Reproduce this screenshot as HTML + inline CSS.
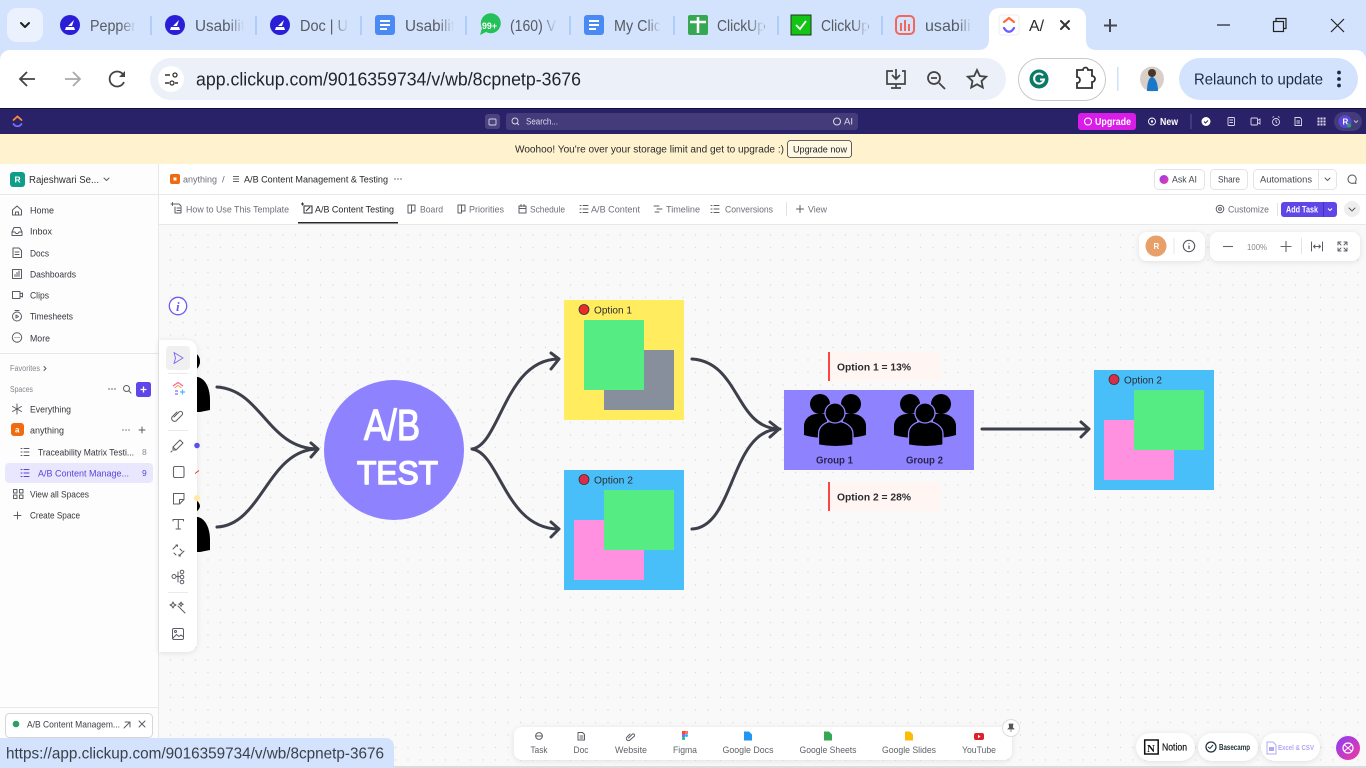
<!DOCTYPE html>
<html lang="en"><head><meta charset="utf-8"><title>A/B Content Management &amp; Testing</title>
<style>
html,body{margin:0;padding:0;width:1366px;height:768px;overflow:hidden;background:#fff}
svg{display:block;position:absolute;left:0;top:0}
text{font-family:"Liberation Sans",sans-serif;white-space:pre}
.tab{font-size:16px;fill:#565a61}
.s{font-size:9.5px;fill:#34363c}
.g{font-size:9.5px;fill:#6c6f77}
.i{fill:none;stroke:#5a5d65;stroke-width:1;stroke-linecap:round;stroke-linejoin:round}
.b{fill:none;stroke:#3f4147;stroke-width:1.8;stroke-linecap:round;stroke-linejoin:round}
.a{fill:none;stroke:#3d3f4a;stroke-width:3;stroke-linecap:round;stroke-linejoin:round}
.d{font-size:9.5px;fill:#5f6269;text-anchor:middle}
.sh{filter:drop-shadow(0 1px 3px rgba(0,0,0,.1))}
</style></head><body>
<svg width="1366" height="768" viewBox="0 0 1366 768" xmlns="http://www.w3.org/2000/svg">
<defs>
<pattern id="dots" width="12.5" height="12.5" patternUnits="userSpaceOnUse" x="2" y="4"><rect width="12.5" height="12.5" fill="#f9f9f9"/><circle cx="6" cy="6" r=".7" fill="#dcdcdc"/></pattern>
<linearGradient id="f"><stop offset="0" stop-color="#d3e3fd" stop-opacity="0"/><stop offset="1" stop-color="#d3e3fd"/></linearGradient>
<linearGradient id="ai" x1="0" y1="0" x2="1" y2="1"><stop offset="0" stop-color="#8b3df5"/><stop offset="1" stop-color="#f23aa0"/></linearGradient>
</defs>

<!-- browser tabs -->
<rect width="1366" height="50" fill="#d3e3fd"/>
<rect x="7" y="8" width="36" height="34" rx="10" fill="#ecf2fd"/>
<path d="M21 23l4 4 4-4" fill="none" stroke="#1f1f1f" stroke-width="2" stroke-linecap="round" stroke-linejoin="round"/>
<g fill="#b0ccfa">
<rect x="150" y="16" width="2" height="19"/><rect x="255" y="16" width="2" height="19"/><rect x="360" y="16" width="2" height="19"/><rect x="465" y="16" width="2" height="19"/><rect x="569" y="16" width="2" height="19"/><rect x="673" y="16" width="2" height="19"/><rect x="777" y="16" width="2" height="19"/><rect x="881" y="16" width="2" height="19"/>
</g>
<circle cx="70" cy="25" r="10" fill="#2a1fd6"/><path d="M65 30h10l-1-3h-8zM68 26l6-6-2 6z" fill="#fff"/>
<circle cx="175" cy="25" r="10" fill="#2a1fd6"/><path d="M170 30h10l-1-3h-8zM173 26l6-6-2 6z" fill="#fff"/>
<circle cx="280" cy="25" r="10" fill="#2a1fd6"/><path d="M275 30h10l-1-3h-8zM278 26l6-6-2 6z" fill="#fff"/>
<rect x="375" y="15" width="20" height="20" rx="3" fill="#4a8af4"/><path d="M380 21h10M380 25h10M380 29h7" stroke="#fff" stroke-width="2"/>
<path d="M480 35l2-7a10 10 0 1 1 4 4z" fill="#25c05a"/><text x="482" y="29" font-size="9" font-weight="700" fill="#fff" textLength="15" lengthAdjust="spacingAndGlyphs">99+</text>
<rect x="584" y="15" width="20" height="20" rx="3" fill="#4a8af4"/><path d="M589 21h10M589 25h10M589 29h7" stroke="#fff" stroke-width="2"/>
<rect x="688" y="15" width="20" height="20" rx="2" fill="#34a853"/><path d="M698 17v16M690 22h16" stroke="#fff" stroke-width="2.500"/>
<rect x="791" y="15" width="20" height="20" fill="#14c414" stroke="#1b3a1b" stroke-width="1"/><path d="M796 25l4 4 6-8" fill="none" stroke="#fff" stroke-width="1.800"/>
<rect x="896" y="16" width="18" height="18" rx="4" fill="none" stroke="#f2675c" stroke-width="2"/><path d="M901 23v8M905 20v11M909 24v7" stroke="#f2675c" stroke-width="2"/>
<text class="tab" x="90" y="31" textLength="46" lengthAdjust="spacingAndGlyphs">Pepper</text>
<text class="tab" x="195" y="31" textLength="50" lengthAdjust="spacingAndGlyphs">Usabilit</text>
<text class="tab" x="300" y="31" textLength="48" lengthAdjust="spacingAndGlyphs">Doc | U</text>
<text class="tab" x="405" y="31" textLength="50" lengthAdjust="spacingAndGlyphs">Usabilit</text>
<text class="tab" x="510" y="31" textLength="46" lengthAdjust="spacingAndGlyphs">(160) V</text>
<text class="tab" x="614" y="31" textLength="47" lengthAdjust="spacingAndGlyphs">My Clic</text>
<text class="tab" x="717" y="31" textLength="48" lengthAdjust="spacingAndGlyphs">ClickUp</text>
<text class="tab" x="821" y="31" textLength="48" lengthAdjust="spacingAndGlyphs">ClickUp</text>
<text class="tab" x="925" y="31" textLength="50" lengthAdjust="spacingAndGlyphs">usabilit</text>
<g fill="url(#f)"><rect x="120" y="14" width="16" height="22"/><rect x="228" y="14" width="16" height="22"/><rect x="333" y="14" width="16" height="22"/><rect x="438" y="14" width="16" height="22"/><rect x="542" y="14" width="15" height="22"/><rect x="646" y="14" width="15" height="22"/><rect x="749" y="14" width="15" height="22"/><rect x="853" y="14" width="15" height="22"/><rect x="957" y="14" width="15" height="22"/></g>
<rect x="136" y="14" width="12" height="22" fill="#d3e3fd"/><rect x="244" y="14" width="8" height="22" fill="#d3e3fd"/><rect x="349" y="14" width="8" height="22" fill="#d3e3fd"/><rect x="454" y="14" width="8" height="22" fill="#d3e3fd"/><rect x="972" y="14" width="8" height="22" fill="#d3e3fd"/>
<path d="M978 50c8 0 11-4 11-11V19c0-7 4-11 11-11h75c7 0 11 4 11 11v20c0 7 3 11 11 11z" fill="#fff"/>
<rect x="999" y="15" width="20" height="20" rx="3" fill="#fff" stroke="#eee"/>
<path d="M1004 22l5-4 5 4" fill="none" stroke="#ff6a3d" stroke-width="2.200" stroke-linecap="round" stroke-linejoin="round"/>
<path d="M1004 28c3 5 7 5 10 0" fill="none" stroke="#6a5cff" stroke-width="2.200" stroke-linecap="round"/>
<text x="1029" y="31" font-size="16" fill="#2a2a2a" textLength="15" lengthAdjust="spacingAndGlyphs">A/</text>
<path d="M1061 21l8 8M1069 21l-8 8" stroke="#333" stroke-width="2" stroke-linecap="round"/>
<path d="M1110 19v13M1104 25.500h13" stroke="#44474e" stroke-width="2"/>
<path d="M1217 25h13" stroke="#222" stroke-width="1.200"/>
<rect x="1273.500" y="21.500" width="10" height="10" fill="none" stroke="#222" stroke-width="1.200"/><path d="M1276 21v-2.500h10v10h-2.500" fill="none" stroke="#222" stroke-width="1.200"/>
<path d="M1331 19l13 13M1344 19l-13 13" stroke="#222" stroke-width="1.200"/>

<!-- toolbar -->
<rect y="50" width="1366" height="58" fill="#fff"/>
<path d="M0 50h10a10 10 0 0 0-10 10z" fill="#d3e3fd"/><path d="M1366 50h-10a10 10 0 0 1 10 10z" fill="#d3e3fd"/>
<path d="M35 79H21M27 72l-7 7 7 7" fill="none" stroke="#444" stroke-width="1.800"/>
<path d="M65 79h14M73 72l7 7-7 7" fill="none" stroke="#aaa" stroke-width="1.800"/>
<path d="M124 76a7.500 7.500 0 1 0 0 6" fill="none" stroke="#444" stroke-width="1.800"/><path d="M125 71v6h-6z" fill="#444"/>
<rect x="150" y="58" width="856" height="42" rx="21" fill="#ebf0f9"/>
<circle cx="171" cy="79" r="13" fill="#fff"/>
<path d="M165 75h5M175 83h3M165 83h4" stroke="#333" stroke-width="1.500"/><circle cx="175" cy="75" r="2" fill="none" stroke="#333" stroke-width="1.300"/><circle cx="172" cy="83" r="2" fill="none" stroke="#333" stroke-width="1.300"/>
<text x="196" y="85.500" font-size="18" fill="#1f2430" textLength="385" lengthAdjust="spacingAndGlyphs">app.clickup.com/9016359734/v/wb/8cpnetp-3676</text>
<path d="M893 71h-6v13h18v-13h-3M891 88h10M896 84v4M896 69v9M892 75l4 4 4-4" fill="none" stroke="#444" stroke-width="1.700"/>
<circle cx="934" cy="78" r="6" fill="none" stroke="#444" stroke-width="1.800"/><path d="M931 78h6M939 83l6 6" stroke="#444" stroke-width="1.800"/>
<path d="M977 70l2.800 6 6.400.7-4.700 4.400 1.300 6.400-5.800-3.200-5.800 3.200 1.300-6.400-4.700-4.400 6.400-.7z" fill="none" stroke="#444" stroke-width="1.800"/>
<rect x="1018.500" y="58.500" width="87" height="42" rx="21" fill="#fff" stroke="#c9c9c9"/>
<circle cx="1039" cy="79" r="9.500" fill="#0b7a66"/><path d="M1043 75.500a5 5 0 1 0 1 4h-4" fill="none" stroke="#fff" stroke-width="2"/>
<path d="M1077 70h6a2.500 2.500 0 0 1 5 0h4v6a3 3 0 0 1 0 6v6h-15v-5a3 3 0 0 0 0-6z" fill="none" stroke="#333" stroke-width="1.800"/>
<rect x="1117" y="67" width="1.500" height="24" fill="#cfe0fb"/>
<ellipse cx="1152" cy="79" rx="12" ry="12.500" fill="#d8cfc8"/><circle cx="1152" cy="73" r="4" fill="#4a352b"/><path d="M1147 91c0-8 2-14 5-14s6 6 6 14z" fill="#1b78c8"/>
<rect x="1179" y="58" width="179" height="42" rx="21" fill="#d3e3fd"/>
<text x="1194" y="84.500" font-size="16" fill="#1f2b45" textLength="129" lengthAdjust="spacingAndGlyphs">Relaunch to update</text>
<circle cx="1339" cy="72.500" r="1.900" fill="#1f2b45"/><circle cx="1339" cy="79" r="1.900" fill="#1f2b45"/><circle cx="1339" cy="85.500" r="1.900" fill="#1f2b45"/>

<!-- clickup nav -->
<rect y="108" width="1366" height="26" fill="#2a2268"/>
<rect y="108" width="1366" height="1" fill="#15123a"/>
<path d="M13.500 120l4-3.500 4 3.500" fill="none" stroke="#ff8a3d" stroke-width="1.800" stroke-linecap="round"/><path d="M13.500 124c2 3 6 3 8 0" fill="none" stroke="#7d6bff" stroke-width="1.800" stroke-linecap="round"/>
<rect x="485" y="114" width="15" height="15" rx="3" fill="#4a4380"/><rect x="489" y="119" width="7" height="6" rx="1" fill="none" stroke="#d4d2e6" stroke-width=".9"/>
<rect x="506" y="113" width="352" height="17" rx="3" fill="#443c7a"/>
<circle cx="515" cy="121" r="3" fill="none" stroke="#ddd" stroke-width=".9"/><path d="M517 123l2 2" stroke="#ddd" stroke-width=".9"/>
<text x="526" y="124.500" font-size="9" fill="#ddd9ee" textLength="32" lengthAdjust="spacingAndGlyphs">Search...</text>
<circle cx="837" cy="121.500" r="3.500" fill="none" stroke="#ddd" stroke-width="1"/><text x="844" y="124.500" font-size="9" fill="#ddd9ee" textLength="9" lengthAdjust="spacingAndGlyphs">AI</text>
<rect x="1078" y="113" width="58" height="17" rx="3" fill="#d91ce8"/>
<circle cx="1088" cy="121.500" r="3.500" fill="none" stroke="#fff" stroke-width="1.100"/>
<text x="1095" y="125" font-size="10" font-weight="700" fill="#fff" textLength="36" lengthAdjust="spacingAndGlyphs">Upgrade</text>
<circle cx="1152" cy="121.500" r="3.500" fill="none" stroke="#fff" stroke-width=".9"/><circle cx="1152" cy="121.500" r="1.200" fill="#fff"/>
<text x="1160" y="125" font-size="10" font-weight="700" fill="#fff" textLength="18" lengthAdjust="spacingAndGlyphs">New</text>
<rect x="1190.500" y="114" width="1" height="15" fill="#5a5390"/>
<circle cx="1206" cy="121.500" r="4.500" fill="#fff"/><path d="M1204 121.500l1.500 1.500 2.500-2.500" fill="none" stroke="#2a2268" stroke-width="1"/>
<g fill="none" stroke="#dad8ea" stroke-width=".9">
<rect x="1228" y="117.500" width="6.500" height="8" rx="1"/><path d="M1229.500 120h3.500M1229.500 122.500h3.500"/>
<rect x="1251" y="118" width="6.500" height="7" rx="1"/><path d="M1257.500 120.500l2.500-1.500v5l-2.500-1.500"/>
<circle cx="1276" cy="122" r="3.500"/><path d="M1272.500 117.500l1.500-1M1279.500 117.500l-1.500-1M1276 120v2l1 1"/>
<path d="M1295 117.500h5l1.500 1.500v6.500h-6.500z"/><path d="M1296.500 121h3.500M1296.500 123h3.500"/>
</g>
<g fill="#dad8ea"><rect x="1317.500" y="117.500" width="2" height="2"/><rect x="1320.500" y="117.500" width="2" height="2"/><rect x="1323.500" y="117.500" width="2" height="2"/><rect x="1317.500" y="120.500" width="2" height="2"/><rect x="1320.500" y="120.500" width="2" height="2"/><rect x="1323.500" y="120.500" width="2" height="2"/><rect x="1317.500" y="123.500" width="2" height="2"/><rect x="1320.500" y="123.500" width="2" height="2"/><rect x="1323.500" y="123.500" width="2" height="2"/></g>
<rect x="1334" y="112" width="28" height="19" rx="9.500" fill="#443c7a"/>
<circle cx="1345" cy="121.500" r="6.500" fill="#5a47d8"/><text x="1342.500" y="124.500" font-size="8" font-weight="700" fill="#fff">R</text><circle cx="1349" cy="125.500" r="2.200" fill="#2f9e6e"/>
<path d="M1354 120.500l2 2 2-2" fill="none" stroke="#c9c6df" stroke-width=".9"/>

<!-- banner -->
<rect y="134" width="1366" height="30" fill="#fff2cf"/>
<text x="515" y="152.500" font-size="10" fill="#2a2a2a" textLength="269" lengthAdjust="spacingAndGlyphs">Woohoo! You're over your storage limit and get to upgrade :)</text>
<rect x="787.500" y="140.500" width="64" height="17" rx="3" fill="#fff8e4" stroke="#3a3a3a" stroke-width=".8"/>
<text x="793" y="152.500" font-size="9.500" fill="#222" textLength="54" lengthAdjust="spacingAndGlyphs">Upgrade now</text>

<!-- canvas -->
<rect x="158" y="225" width="1208" height="543" fill="url(#dots)"/>

<!-- header/tabs -->
<rect x="158" y="164" width="1208" height="60" fill="#fff"/>
<rect x="158" y="194" width="1208" height="1" fill="#e8e8ea"/>
<rect x="158" y="224" width="1208" height="1" fill="#e8e8ea"/>
<rect x="170" y="174" width="10" height="10" rx="2" fill="#f06a0f"/><rect x="173.500" y="177.500" width="3" height="3" fill="#fff"/>
<text class="g" x="183" y="182.500" textLength="34" lengthAdjust="spacingAndGlyphs">anything</text>
<text class="g" x="222" y="182.500">/</text>
<path d="M233 176.500h6M233 179h6M233 181.500h6" stroke="#666" stroke-width=".9"/>
<text class="s" x="244" y="182.500" style="fill:#26262b" textLength="144" lengthAdjust="spacingAndGlyphs">A/B Content Management &amp; Testing</text>
<g fill="#888"><circle cx="395" cy="179" r=".9"/><circle cx="398" cy="179" r=".9"/><circle cx="401" cy="179" r=".9"/></g>
<g fill="#fff" stroke="#e4e4e6"><rect x="1154.500" y="169.500" width="50" height="20" rx="4"/><rect x="1210.500" y="169.500" width="37" height="20" rx="4"/><rect x="1253.500" y="169.500" width="83" height="20" rx="4"/></g>
<rect x="1318" y="170" width="1" height="19" fill="#e4e4e6"/>
<circle cx="1164" cy="179.500" r="4.500" fill="url(#ai)"/>
<text class="g" x="1172" y="182.500" textLength="25" lengthAdjust="spacingAndGlyphs" style="fill:#45474e">Ask AI</text>
<text class="g" x="1218" y="182.500" textLength="22" lengthAdjust="spacingAndGlyphs" style="fill:#45474e">Share</text>
<text class="g" x="1260" y="182.500" textLength="52" lengthAdjust="spacingAndGlyphs" style="fill:#45474e">Automations</text>
<path d="M1325 178l2.500 2.500 2.500-2.500" class="i"/>
<path d="M1352 175a4.200 4.200 0 0 1 3.500 6.500l.5 2-2-.5a4.200 4.200 0 1 1-2-8z" class="i"/>
<text class="g" x="186" y="212.500" textLength="103" lengthAdjust="spacingAndGlyphs">How to Use This Template</text>
<path d="M173 204h6l2 2v7h-6v-6M171 204h3M172.500 202.500v3M177 208h3M177 210.500h3" class="i"/>
<text x="315" y="212.500" font-size="9.500" fill="#26262b" textLength="79" lengthAdjust="spacingAndGlyphs">A/B Content Testing</text>
<path d="M304 206h8v7h-8zM301 204h3M302.500 202.500v3M306 211l4-4" fill="none" stroke="#2b2b30" stroke-width="1"/>
<rect x="298" y="222" width="100" height="1.500" fill="#26262b"/>
<path d="M408 205h3.500v8H408zM411.500 205h3.500v6h-3.500z" class="i"/><text class="g" x="420" y="212.500" textLength="23" lengthAdjust="spacingAndGlyphs">Board</text>
<path d="M458 205h3.500v8H458zM461.500 205h3.500v6h-3.500z" class="i"/><text class="g" x="469" y="212.500" textLength="35" lengthAdjust="spacingAndGlyphs">Priorities</text>
<path d="M519 206h7v7h-7zM519 208.500h7M521 204.500v2M524 204.500v2" class="i"/><text class="g" x="530" y="212.500" textLength="35" lengthAdjust="spacingAndGlyphs">Schedule</text>
<path d="M580 205.500h1M580 209h1M580 212.500h1M583 205.500h5M583 209h5M583 212.500h5" class="i"/><text class="g" x="591" y="212.500" textLength="49" lengthAdjust="spacingAndGlyphs">A/B Content</text>
<path d="M654 206h5M657 209h5M655 212h4" class="i"/><text class="g" x="666" y="212.500" textLength="34" lengthAdjust="spacingAndGlyphs">Timeline</text>
<path d="M711 205.500h1M711 209h1M711 212.500h1M714 205.500h5M714 209h5M714 212.500h5" class="i"/><text class="g" x="725" y="212.500" textLength="48" lengthAdjust="spacingAndGlyphs">Conversions</text>
<rect x="786" y="202" width="1" height="14" fill="#e2e2e4"/>
<path d="M800 205.500v7M796.500 209h7" class="i"/><text class="g" x="808" y="212.500" textLength="19" lengthAdjust="spacingAndGlyphs">View</text>
<circle cx="1220" cy="209" r="3.800" class="i"/><circle cx="1220" cy="209" r="1.400" class="i"/>
<text class="g" x="1228" y="212.500" textLength="41" lengthAdjust="spacingAndGlyphs">Customize</text>
<rect x="1277" y="203" width="1" height="13" fill="#e2e2e4"/>
<rect x="1281" y="202" width="56" height="15" rx="3" fill="#5f46e8"/>
<text x="1286" y="212.500" font-size="9" font-weight="700" fill="#fff" textLength="32" lengthAdjust="spacingAndGlyphs">Add Task</text>
<rect x="1323" y="202" width="1" height="15" fill="#4332b8"/><path d="M1328 208.500l2 2 2-2" fill="none" stroke="#fff"/>
<circle cx="1352" cy="209" r="8" fill="#eeeeee"/><path d="M1349 208l3 3 3-3" class="i"/>

<!-- sidebar -->
<rect x="0" y="164" width="158" height="574" fill="#fdfdfd"/>
<rect x="158" y="164" width="1" height="604" fill="#e8e8ea"/>
<rect x="0" y="194" width="158" height="1" fill="#e8e8ea"/>
<rect x="10" y="172" width="15" height="15" rx="3" fill="#0f9d8a"/><text x="14.500" y="182.500" font-size="8.500" font-weight="700" fill="#fff">R</text>
<text x="29" y="182.800" font-size="10" fill="#2e2e33" textLength="70" lengthAdjust="spacingAndGlyphs">Rajeshwari Se...</text>
<path d="M104 178l2.500 2.500 2.500-2.500" class="i"/>
<path d="M12.500 210l4.500-4 4.500 4v5h-9zM15.500 215v-3h3v3" class="i"/><text class="s" x="30" y="213.300" textLength="24" lengthAdjust="spacingAndGlyphs">Home</text>
<path d="M12 232l2-4.500h6l2 4.500v3.500H12zM12 232h3l1 1.500h2l1-1.500h3" class="i"/><text class="s" x="30" y="234.300" textLength="22" lengthAdjust="spacingAndGlyphs">Inbox</text>
<path d="M13 248h6l2.500 2.500v7H13zM15 252h4M15 254.500h4" class="i"/><text class="s" x="30" y="256.300" textLength="19" lengthAdjust="spacingAndGlyphs">Docs</text>
<path d="M12.500 269.500h9v9h-9zM15 276.500v-2M17 276.500v-4M19 276.500v-5.500" class="i"/><text class="s" x="30" y="277.300" textLength="46" lengthAdjust="spacingAndGlyphs">Dashboards</text>
<path d="M12.500 291.500h7.500v7h-7.500zM20 294l2.500-1v4l-2.500-1" class="i"/><text class="s" x="30" y="298.300" textLength="19" lengthAdjust="spacingAndGlyphs">Clips</text>
<circle cx="17" cy="316.500" r="4.500" class="i"/><path d="M15 310.500h4M16 315l2.500 1.500-2.500 1.500z" class="i"/><text class="s" x="30" y="319.300" textLength="43" lengthAdjust="spacingAndGlyphs">Timesheets</text>
<circle cx="17" cy="337.500" r="4.700" class="i"/><path d="M15 337.500h.1M17 337.500h.1M19 337.500h.1" class="i"/><text class="s" x="30" y="341.300" textLength="20" lengthAdjust="spacingAndGlyphs">More</text>
<rect y="353" width="158" height="1" fill="#e8e8ea"/>
<text x="10" y="371" font-size="8" fill="#85878e" textLength="30" lengthAdjust="spacingAndGlyphs">Favorites</text><path d="M44 366.500l2 2-2 2" class="i"/>
<text x="10" y="392" font-size="8" fill="#85878e" textLength="23" lengthAdjust="spacingAndGlyphs">Spaces</text>
<g fill="#888"><circle cx="109" cy="389" r=".9"/><circle cx="112" cy="389" r=".9"/><circle cx="115" cy="389" r=".9"/></g>
<circle cx="126.500" cy="388.500" r="3" class="i"/><path d="M129 391l2 2" class="i"/>
<rect x="136" y="382" width="15" height="15" rx="2.500" fill="#5f46e8"/><path d="M143.500 386.500v6M140.500 389.500h6" stroke="#fff" stroke-width="1.300"/>
<path d="M17 404v10M12.500 406.500l9 5M21.500 406.500l-9 5" class="i"/><text class="s" x="30" y="412.300" textLength="41" lengthAdjust="spacingAndGlyphs">Everything</text>
<rect x="11" y="423" width="13" height="13" rx="3" fill="#f06a0f"/><text x="15" y="432.500" font-size="8" font-weight="700" fill="#fff">a</text>
<text class="s" x="30" y="433.300" textLength="34" lengthAdjust="spacingAndGlyphs">anything</text>
<g fill="#999"><circle cx="123" cy="430" r=".9"/><circle cx="126" cy="430" r=".9"/><circle cx="129" cy="430" r=".9"/></g><path d="M142 427v6M139 430h6" class="i"/>
<path d="M21 448.500h1M21 452h1M21 455.500h1M24 448.500h5M24 452h5M24 455.500h5" class="i"/>
<text class="s" x="38" y="455.300" textLength="96" lengthAdjust="spacingAndGlyphs">Traceability Matrix Testi...</text>
<text x="142" y="455" font-size="8.500" fill="#8a8c93">8</text>
<rect x="5" y="463" width="148" height="20" rx="4" fill="#e8e7fd"/>
<path d="M21 469.500h1M21 473h1M21 476.500h1M24 469.500h5M24 473h5M24 476.500h5" fill="none" stroke="#5746d9" stroke-linecap="round"/>
<text x="38" y="476.300" font-size="9.500" fill="#5746d9" textLength="91" lengthAdjust="spacingAndGlyphs">A/B Content Manage...</text>
<text x="142" y="476" font-size="8.500" fill="#5746d9">9</text>
<path d="M13.500 489.500h3.500v3.500h-3.500zM19.500 489.500h3.500v3.500h-3.500zM13.500 495h3.500v3.500h-3.500zM19.500 495h3.500v3.500h-3.500z" class="i"/>
<text class="s" x="30" y="497.300" textLength="59" lengthAdjust="spacingAndGlyphs">View all Spaces</text>
<path d="M17.500 512v7M14 515.500h7" class="i"/><text class="s" x="30" y="518.300" textLength="50" lengthAdjust="spacingAndGlyphs">Create Space</text>
<rect y="707" width="158" height="1" fill="#e8e8ea"/>
<rect x="5.500" y="713.500" width="147" height="24" rx="4" fill="#fff" stroke="#d6d6d8"/>
<circle cx="16" cy="724" r="3.300" fill="#2e9e66"/>
<text x="27" y="727.500" font-size="9.500" fill="#3c3f46" textLength="93" lengthAdjust="spacingAndGlyphs">A/B Content Managem...</text>
<path d="M124 728l6-6M125 722h5v5" class="i"/><path d="M139 721l6 6M145 721l-6 6" class="i"/>

<!-- black figures behind toolbar -->
<path d="M190 353h5a9 9 0 0 1 5 8 9 9 0 0 1-5 9h-5z" fill="#000"/>
<path d="M190 377h8c8 2 12 12 12 23v10l-10 2h-10z" fill="#000"/>
<path d="M190 500h6c3 2 4 5 4 6s-1 4-4 6h-6z" fill="#000"/>
<path d="M190 517h8c8 2 12 12 12 23v10l-10 2h-10z" fill="#000"/>

<!-- diagram arrows -->
<path class="a" d="M217 387C262 390 268 449 318 449M217 527C262 525 268 449 318 449M311 443l7 6-7 8"/>
<circle cx="394" cy="450" r="70" fill="#8f82ff"/>
<text x="364" y="440" font-size="44" fill="#fff" stroke="#fff" stroke-width="1.300" stroke-linejoin="round" textLength="56" lengthAdjust="spacingAndGlyphs">A/B</text>
<text x="357" y="484" font-size="32" fill="#fff" stroke="#fff" stroke-width="1.500" stroke-linejoin="round" textLength="81" lengthAdjust="spacingAndGlyphs">TEST</text>
<path class="a" d="M472 449C500 445 505 360 558 359M551 353l8 6-8 10M472 449C500 453 505 528 558 529M551 522l8 7-8 8"/>
<path class="a" d="M692 359C740 362 735 429 780 429M692 529C735 527 730 429 780 429M770 422l9 7-9 8"/>
<path class="a" d="M982 429H1088M1081 422l8 7-8 8"/>

<!-- Option 1 -->
<rect x="564" y="300" width="120" height="120" fill="#ffed5f"/>
<rect x="604" y="350" width="70" height="60" fill="#878f9d"/>
<rect x="584" y="320" width="60" height="70" fill="#55ec84"/>
<circle cx="584" cy="309.500" r="5" fill="#ea2b2b" stroke="#333" stroke-width=".8"/>
<text x="594" y="313.500" font-size="10" fill="#2c2c30" textLength="38" lengthAdjust="spacingAndGlyphs">Option 1</text>
<!-- Option 2 -->
<rect x="564" y="470" width="120" height="120" fill="#48bff9"/>
<rect x="574" y="520" width="70" height="60" fill="#ff91e0"/>
<rect x="604" y="490" width="70" height="60" fill="#55ec84"/>
<circle cx="584" cy="479.500" r="5" fill="#d92d48" stroke="#333" stroke-width=".8"/>
<text x="594" y="483.500" font-size="10" fill="#2c2c30" textLength="39" lengthAdjust="spacingAndGlyphs">Option 2</text>
<!-- groups -->
<rect x="784" y="390" width="190" height="80" fill="#8f82ff"/>
<circle cx="820" cy="404" r="10" fill="#000"/><circle cx="851" cy="404" r="10" fill="#000"/>
<path d="M804 435v-9c0-7 6-12 13-12h10v24c-8 0-16-1-23-3z" fill="#000"/>
<path d="M866 435v-9c0-7-6-12-13-12h-10v24c8 0 16-1 23-3z" fill="#000"/>
<path d="M818.500 445v-11c0-8 7-13 16.500-13s18 5 18 13v11c-11 2-24 2-34.500 0z" fill="#000" stroke="#8f82ff" stroke-width="1.300"/>
<circle cx="835" cy="413" r="10" fill="#000" stroke="#8f82ff" stroke-width="1.300"/>
<circle cx="910" cy="404" r="10" fill="#000"/><circle cx="941" cy="404" r="10" fill="#000"/>
<path d="M894 435v-9c0-7 6-12 13-12h10v24c-8 0-16-1-23-3z" fill="#000"/>
<path d="M956 435v-9c0-7-6-12-13-12h-10v24c8 0 16-1 23-3z" fill="#000"/>
<path d="M908.500 445v-11c0-8 7-13 16.500-13s18 5 18 13v11c-11 2-24 2-34.500 0z" fill="#000" stroke="#8f82ff" stroke-width="1.300"/>
<circle cx="925" cy="413" r="10" fill="#000" stroke="#8f82ff" stroke-width="1.300"/>
<text x="816" y="463.500" font-size="10" font-weight="700" fill="#2a2350" textLength="37" lengthAdjust="spacingAndGlyphs">Group 1</text>
<text x="906" y="463.500" font-size="10" font-weight="700" fill="#2a2350" textLength="37" lengthAdjust="spacingAndGlyphs">Group 2</text>
<!-- callouts -->
<rect x="828" y="352" width="113" height="29" fill="#fff5f2"/><rect x="828" y="352" width="2" height="29" fill="#f44"/>
<text x="837" y="370.500" font-size="10" font-weight="700" fill="#2c2c30" textLength="74" lengthAdjust="spacingAndGlyphs">Option 1 = 13%</text>
<rect x="828" y="482" width="113" height="29" fill="#fff5f2"/><rect x="828" y="482" width="2" height="29" fill="#f44"/>
<text x="837" y="500.500" font-size="10" font-weight="700" fill="#2c2c30" textLength="74" lengthAdjust="spacingAndGlyphs">Option 2 = 28%</text>
<!-- result -->
<rect x="1094" y="370" width="120" height="120" fill="#48bff9"/>
<rect x="1104" y="420" width="70" height="60" fill="#ff91e0"/>
<rect x="1134" y="390" width="70" height="60" fill="#55ec84"/>
<circle cx="1114" cy="379.500" r="5" fill="#d92d48" stroke="#333" stroke-width=".8"/>
<text x="1124" y="383.500" font-size="10" fill="#2c2c30" textLength="38" lengthAdjust="spacingAndGlyphs">Option 2</text>

<!-- info -->
<circle cx="178" cy="306" r="8.700" fill="#fff" stroke="#6b5cf0" stroke-width="1.300"/>
<text x="176" y="311" font-size="13" font-style="italic" font-weight="700" fill="#6b5cf0" style="font-family:'Liberation Serif',serif">i</text>

<!-- left tools -->
<path class="sh" d="M159 340h28a10 10 0 0 1 10 10v292a10 10 0 0 1-10 10h-28z" fill="#fff"/>
<rect x="166" y="346" width="24" height="24" rx="4" fill="#f0f0f0"/>
<path d="M174 352.500l9 5.500-9 5.500 1.500-5.500z" fill="none" stroke="#7b6ff2" stroke-linejoin="round"/>
<rect x="168" y="373" width="20" height="1" fill="#eaeaea"/>
<path d="M173 386l5-3.500 5 3.500" fill="none" stroke="#ff5fa8" stroke-width="1.300"/><path d="M174.500 388l3.500-2.500 3.500 2.500" fill="none" stroke="#ff9a3d"/><path d="M175 391h3M175 394h3" stroke="#7d6bff" stroke-width="1.300"/><path d="M180 392h5M182.500 389.500v5" stroke="#4cb8ff" stroke-width="1.200"/>
<path d="M174 417l5-5a2 2 0 0 1 3 3l-6 6a3 3 0 0 1-4-4l5-5" class="i"/>
<rect x="168" y="430" width="20" height="1" fill="#eaeaea"/>
<path d="M173 447l7-7 3 3-7 7h-3zM173 447l3 3M172 451l-1 1" class="i"/>
<rect x="173.500" y="466.500" width="10.500" height="11" rx="1.500" fill="none" stroke="#62656d" stroke-width="1.100"/>
<path d="M173.500 493.500h10.500v6l-4.500 4.500h-6zM179.500 504v-4.500h4.500" class="i"/>
<path d="M173 519.500h10.500M178.300 519.500V529M176 529h4.500M173 519.500v1.500M183.500 519.500v1.500" class="i"/>
<path d="M173 549l4-4M176 545l1.500 0 0 1.500M184 551l-5 5M179 554.500v1.500h1.500M180 549l2 2M174 553l2 2" class="i"/>
<circle cx="174" cy="576.500" r="2" class="i"/><circle cx="182" cy="572" r="1.800" class="i"/><circle cx="182" cy="577" r="1.800" class="i"/><circle cx="182" cy="582" r="1.800" class="i"/><path d="M176 576.500h4M178 572v10" class="i"/>
<rect x="168" y="592" width="20" height="1" fill="#eaeaea"/>
<path d="M178 606l7 7M173 602l1 2 2 1-2 1-1 2-1-2-2-1 2-1zM181 602l.7 1.500 1.500.7-1.500.7-.7 1.500-.7-1.500-1.500-.7 1.500-.7z" class="i"/>
<rect x="172.500" y="628.500" width="11" height="11" rx="1.500" class="i"/><circle cx="175.500" cy="631.500" r="1" class="i"/><path d="M173 638l3.500-3.500 2.500 2 2-1.500 2.500 2" class="i"/>
<circle cx="197" cy="445.500" r="2.800" fill="#5a52ee"/>
<path d="M195 473.500l4-3" stroke="#e8323c"/>
<circle cx="197" cy="498" r="3" fill="#ffe9a6"/>

<!-- top-right canvas panels -->
<rect class="sh" x="1139" y="232" width="66" height="29" rx="8" fill="#fff"/>
<circle cx="1156" cy="246" r="10.500" fill="#e8a06a"/><text x="1153.500" y="249" font-size="8" font-weight="700" fill="#fff">R</text>
<rect x="1173.500" y="238" width="1" height="16" fill="#e4e4e6"/>
<circle cx="1189" cy="246" r="5.700" fill="none" stroke="#55585f" stroke-width="1.100"/><path d="M1189 245.500v3.500M1189 243v.8" stroke="#55585f" stroke-width="1.300"/>
<rect class="sh" x="1210" y="232" width="150" height="29" rx="8" fill="#fff"/>
<path d="M1223 246.500h10" stroke="#666" stroke-width="1.100"/>
<text x="1247" y="250" font-size="8.500" fill="#888" textLength="20" lengthAdjust="spacingAndGlyphs">100%</text>
<path d="M1286 241v11M1280.500 246.500h11" stroke="#666" stroke-width="1.100"/>
<rect x="1301" y="238" width="1" height="16" fill="#e4e4e6"/>
<path d="M1311.500 242v9M1322.500 242v9M1313.500 246.500h7M1315 245l-1.500 1.500 1.500 1.500M1319 245l1.500 1.500-1.500 1.500" class="i"/>
<path d="M1338 245v-3h3M1347 245v-3h-3M1338 248v3h3M1347 248v3h-3" class="i"/><path d="M1339 243l2 2M1346 243l-2 2M1339 250l2-2M1346 250l-2-2" class="i"/>

<!-- bottom dock -->
<rect x="394" y="766" width="972" height="2" fill="#dcdcdc"/>
<rect class="sh" x="514" y="727" width="498" height="33" rx="8" fill="#fff"/>
<circle cx="539" cy="736" r="3.400" class="i"/><path d="M536 736h6" class="i"/>
<path d="M578 732.500h4.500l2 2v5.500h-6.500zM580 736h3M580 738h3" class="i"/>
<path d="M628.500 738l4-4a1.500 1.500 0 0 1 2 2l-4.500 4a2 2 0 0 1-3-3l3-3" class="i"/>
<rect x="682" y="731" width="3" height="3" fill="#f24e1e"/><rect x="685" y="731" width="3" height="3" fill="#ff7262"/><rect x="682" y="734" width="3" height="3" fill="#a259ff"/><circle cx="686.500" cy="735.500" r="1.500" fill="#1abcfe"/><rect x="682" y="737" width="3" height="3" rx="1" fill="#0acf83"/>
<path d="M744 731.500h5l3 3v6h-8z" fill="#2196f3"/>
<path d="M824 731.500h5l3 3v6h-8z" fill="#34a853"/>
<path d="M905 731.500h5l3 3v6h-8z" fill="#fbbc04"/>
<rect x="974" y="733" width="10" height="7" rx="2" fill="#e0202a"/><path d="M978 734.800l2.500 1.700-2.500 1.700z" fill="#fff"/>
<text class="d" x="539" y="753" textLength="17" lengthAdjust="spacingAndGlyphs">Task</text>
<text class="d" x="581" y="753" textLength="15" lengthAdjust="spacingAndGlyphs">Doc</text>
<text class="d" x="631" y="753" textLength="32" lengthAdjust="spacingAndGlyphs">Website</text>
<text class="d" x="685" y="753" textLength="24" lengthAdjust="spacingAndGlyphs">Figma</text>
<text class="d" x="748" y="753" textLength="51" lengthAdjust="spacingAndGlyphs">Google Docs</text>
<text class="d" x="828" y="753" textLength="57" lengthAdjust="spacingAndGlyphs">Google Sheets</text>
<text class="d" x="909" y="753" textLength="54" lengthAdjust="spacingAndGlyphs">Google Slides</text>
<text class="d" x="979" y="753" textLength="34" lengthAdjust="spacingAndGlyphs">YouTube</text>
<circle cx="1011" cy="728" r="8.500" fill="#fff" stroke="#ddd"/><path d="M1009 724h4l-.5 3.500 1.500 1.500h-6l1.500-1.500zM1011 729v3" fill="#555" stroke="#555" stroke-width=".7"/>

<!-- integrations -->
<rect class="sh" x="1136" y="733" width="59" height="28" rx="14" fill="#fff"/>
<rect x="1144.700" y="740" width="13.500" height="14" fill="#fff" stroke="#111" stroke-width="1.500"/><text x="1147" y="752" font-size="11" font-weight="700" fill="#111" style="font-family:'Liberation Serif',serif">N</text>
<text x="1162" y="750.500" font-size="10" fill="#111" textLength="25" lengthAdjust="spacingAndGlyphs" stroke="#111" stroke-width=".2">Notion</text>
<rect class="sh" x="1198" y="733" width="60" height="28" rx="14" fill="#fff"/>
<circle cx="1211" cy="747" r="5" fill="none" stroke="#1d2d35" stroke-width="1.200"/><path d="M1208 747l2 1.500 3-3.500" fill="none" stroke="#1d2d35"/>
<text x="1219" y="750" font-size="8" font-weight="700" fill="#1d2d35" textLength="31" lengthAdjust="spacingAndGlyphs">Basecamp</text>
<rect class="sh" x="1261" y="733" width="59" height="28" rx="14" fill="#fff"/>
<path d="M1267 742h6l3 3v9h-9z" fill="none" stroke="#b0a8f5"/><rect x="1269" y="747" width="5" height="4" fill="#b0a8f5"/>
<text x="1278" y="750" font-size="7.500" font-weight="700" fill="#b0a8f5" textLength="36" lengthAdjust="spacingAndGlyphs">Excel &amp; CSV</text>
<circle cx="1348" cy="748" r="12" fill="url(#ai)"/><circle cx="1348" cy="748" r="5" fill="none" stroke="#fff" stroke-width="1.200"/><path d="M1344.500 745l7 6M1351.500 745l-7 6" stroke="#fff" stroke-width=".9"/>

<!-- status bubble -->
<path d="M0 738h386a8 8 0 0 1 8 8v22H0z" fill="#d3e3fd"/>
<text x="6" y="758.500" font-size="16" fill="#3a4049" textLength="378" lengthAdjust="spacingAndGlyphs">https://app.clickup.com/9016359734/v/wb/8cpnetp-3676</text>
</svg>
</body></html>
